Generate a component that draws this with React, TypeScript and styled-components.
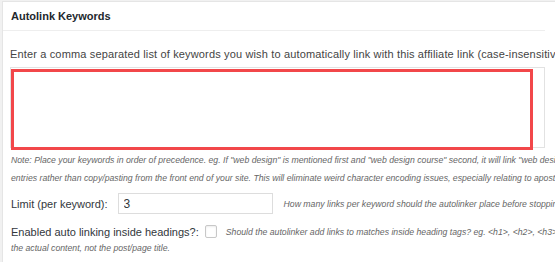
import React from "react";
import styled, { createGlobalStyle } from "styled-components";

const GlobalStyle = createGlobalStyle`
  html, body {
    margin: 0;
    padding: 0;
    background: #f1f1f1;
    overflow: hidden;
  }
  body {
    font-family: "Liberation Sans", Arial, sans-serif;
    color: #444;
  }
`;

const Page = styled.div`
  padding: 1px 0 0 2px;
  width: 1200px;
`;

const Postbox = styled.div`
  background: #fff;
  border-top: 1px solid #e5e5e5;
  border-left: 1px solid #e5e5e5;
  height: 300px;
`;

const Header = styled.h2`
  margin: 0;
  width: 542px;
  height: 29px;
  box-sizing: border-box;
  padding: 0 0 0 8px;
  border-bottom: 1px solid #eee;
  font-size: 11px;
  font-weight: 700;
  line-height: 29px;
  color: #23282d;
`;

const Inside = styled.div`
  padding: 0 0 0 7px;
`;

const Lead = styled.p`
  margin: 15px 0 5px;
  font-size: 11px;
  letter-spacing: 0.15px;
  line-height: 16px;
  white-space: nowrap;
  color: #444;
`;

const AreaWrap = styled.div`
  position: relative;
  width: 535px;
  height: 81px;
`;

const KeywordArea = styled.textarea`
  display: block;
  box-sizing: border-box;
  width: 100%;
  height: 100%;
  margin: 0;
  border: 1px solid #e2e2e2;
  resize: none;
  background: #fff;
`;

const Highlight = styled.div`
  position: absolute;
  left: 1px;
  top: 2px;
  width: 522px;
  height: 81px;
  box-sizing: border-box;
  border: 3px solid #f2474a;
  pointer-events: none;
`;

const Note = styled.p`
  margin: 3px 0 0 1px;
  font-size: 8.7px;
  font-style: italic;
  line-height: 18px;
  color: #666;
  white-space: nowrap;
`;

const Field = styled.p<{ $top: number }>`
  display: flex;
  align-items: center;
  margin: ${(p) => p.$top}px 0 0 1px;
  white-space: nowrap;
`;

const Label = styled.label<{ $gap: number }>`
  font-size: 11px;
  color: #32373c;
  margin-right: ${(p) => p.$gap}px;
`;

const TextInput = styled.input`
  box-sizing: border-box;
  width: 155px;
  height: 21px;
  margin: 0 11px 0 0;
  padding: 0 5px;
  border: 1px solid #ddd;
  font-family: "Liberation Sans", Arial, sans-serif;
  font-size: 12px;
  color: #32373c;
  outline: none;
`;

const Desc = styled.span`
  font-size: 8.7px;
  font-style: italic;
  color: #666;
`;

const Check = styled.span`
  display: inline-block;
  box-sizing: border-box;
  width: 12px;
  height: 13px;
  margin: 0 9px 0 0;
  border: 1px solid #c8c8c8;
  border-radius: 2px;
  box-shadow: inset 0 1px 2px rgba(0, 0, 0, 0.08);
`;

const Tail = styled.p`
  margin: 3px 0 0 1px;
  font-size: 8.7px;
  font-style: italic;
  line-height: 14px;
  color: #666;
`;

export default function App() {
  return (
    <>
      <GlobalStyle />
      <Page>
        <Postbox>
          <Header>Autolink Keywords</Header>
          <Inside>
            <Lead>
              Enter a comma separated list of keywords you wish to automatically
              link with this affiliate link (case-insensitive).
            </Lead>
            <AreaWrap>
              <KeywordArea />
              <Highlight />
            </AreaWrap>
            <Note>
              Note: Place your keywords in order of precedence. eg. If "web
              design" is mentioned first and "web design course" second, it will
              link "web design" only.
              <br />
              entries rather than copy/pasting from the front end of your site.
              This will eliminate weird character encoding issues, especially
              relating to apostrophes.
            </Note>
            <Field $top={6}>
              <Label $gap={10}>Limit (per keyword):</Label>
              <TextInput defaultValue="3" />
              <Desc>
                How many links per keyword should the autolinker place before
                stopping.
              </Desc>
            </Field>
            <Field $top={11}>
              <Label $gap={6}>Enabled auto linking inside headings?:</Label>
              <Check />
              <Desc>
                Should the autolinker add links to matches inside heading tags?
                eg. &lt;h1&gt;, &lt;h2&gt;, &lt;h3&gt;, etc. This only applies to
                headings in
              </Desc>
            </Field>
            <Tail>the actual content, not the post/page title.</Tail>
          </Inside>
        </Postbox>
      </Page>
    </>
  );
}
